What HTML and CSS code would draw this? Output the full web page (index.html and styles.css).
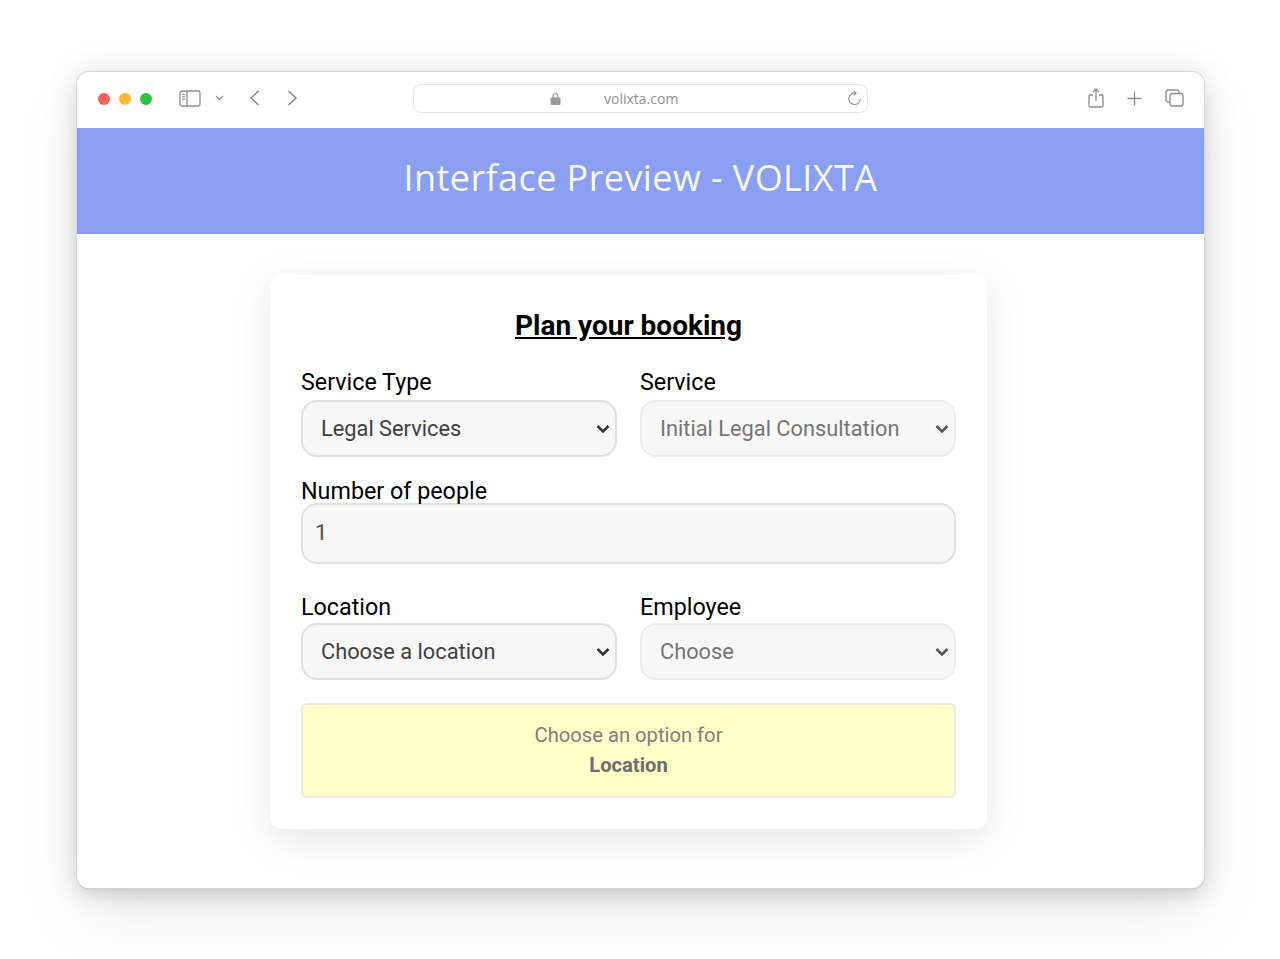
FILE: index.html
```html
<!DOCTYPE html>
<html lang="en">
<head>
<meta charset="utf-8">
<title>Interface Preview - VOLIXTA</title>
<link rel="stylesheet" href="styles.css">
</head>
<body>
<div class="window">
  <div class="toolbar">
    <div class="lights"><span class="light red"></span><span class="light yellow"></span><span class="light green"></span></div>
    <svg class="ic sidebar" width="22" height="17" viewBox="0 0 22 17" fill="none" stroke="#8c8c8c" stroke-width="1.3"><rect x="1" y="1" width="20" height="15" rx="2"/><path d="M8 1v15"/><path d="M3 4.500h3M3 6.800h3M3 9.100h3" stroke-width="1.1"/></svg>
    <svg class="ic chev" width="9" height="6" viewBox="0 0 9 6" fill="none" stroke="#8c8c8c" stroke-width="1.1"><path d="M1 1l3.500 3.500L8 1"/></svg>
    <svg class="ic back" width="11" height="16" viewBox="0 0 11 16" fill="none" stroke="#808080" stroke-width="1.4"><path d="M9.500 1L2 8l7.500 7"/></svg>
    <svg class="ic fwd" width="11" height="16" viewBox="0 0 11 16" fill="none" stroke="#808080" stroke-width="1.4"><path d="M1.500 1L9 8l-7.500 7"/></svg>
    <div class="url">
      <svg class="lock" width="11" height="13" viewBox="0 0 11 13"><path d="M3 6V4a2.500 2.500 0 0 1 5 0v2" fill="none" stroke="#9a9a9a" stroke-width="1.2"/><rect x="0.500" y="5.500" width="10" height="7.500" rx="1" fill="#9a9a9a"/></svg>
      <span class="domain">volixta.com</span>
      <svg class="reload" width="15" height="16" viewBox="0 0 15 16" fill="none" stroke="#8c8c8c" stroke-width="1.1"><path d="M8.500 3.200A5.700 5.700 0 1 0 13.200 9"/><path d="M6.800 0.800L9.200 3.200 6.800 5.400"/></svg>
    </div>
    <div class="actions">
      <svg width="16" height="20" viewBox="0 0 16 20" fill="none" stroke="#8c8c8c" stroke-width="1.3"><path d="M5 7H2a1 1 0 0 0-1 1v10a1 1 0 0 0 1 1h12a1 1 0 0 0 1-1V8a1 1 0 0 0-1-1h-3"/><path d="M8 13V1M5 4l3-3 3 3"/></svg>
      <svg width="15" height="15" viewBox="0 0 15 15" fill="none" stroke="#8c8c8c" stroke-width="1.3"><path d="M7.500 0.500v14M0.500 7.500h14"/></svg>
      <svg width="19" height="18" viewBox="0 0 19 18" fill="none" stroke="#8c8c8c" stroke-width="1.3"><path d="M5 13H3a2 2 0 0 1-2-2V3a2 2 0 0 1 2-2h9a2 2 0 0 1 2 2v2"/><rect x="5" y="4.500" width="13" height="12.500" rx="2"/></svg>
    </div>
  </div>
  <header class="banner">Interface Preview - VOLIXTA</header>
  <main class="card">
    <h1 class="title">Plan your booking</h1>
    <div class="row first">
      <div class="field">
        <label class="label">Service Type</label>
        <select class="control"><option>Legal Services</option></select>
      </div>
      <div class="field">
        <label class="label">Service</label>
        <select class="control" disabled><option>Initial Legal Consultation</option></select>
      </div>
    </div>
    <div class="people">
      <label class="label">Number of people</label>
      <input class="number" type="text" value="1">
    </div>
    <div class="row second">
      <div class="field">
        <label class="label">Location</label>
        <select class="control"><option>Choose a location</option></select>
      </div>
      <div class="field">
        <label class="label">Employee</label>
        <select class="control" disabled><option>Choose</option></select>
      </div>
    </div>
    <div class="notice">Choose an option for<br><strong>Location</strong></div>
  </main>
</div>
</body>
</html>
```
FILE: styles.css
```css
* { box-sizing: border-box; }
html, body { margin: 0; height: 100%; }
body {
  background: #fff;
  padding: 72px 76px 0 77px;
  height: 959px;
  overflow: hidden;
  font-family: Roboto, sans-serif;
}
.window {
  height: 816px;
  background: #fff;
  border-radius: 12px;
  box-shadow: 0 0 0 1px #d6d6d6, 0 1px 1px #aaa, 0 8px 16px rgba(0,0,0,.1), 0 0 36px rgba(0,0,0,.09), 0 26px 64px rgba(0,0,0,.08);
}
.toolbar {
  height: 56px;
  display: flex;
  align-items: center;
  padding: 0 0 4px 21px;
  background: #fff;
  border-radius: 12px 12px 0 0;
}
.lights { display: flex; gap: 9px; margin-top: 2px; }
.light { width: 12px; height: 12px; border-radius: 50%; }
.red { background: #fe5f57; }
.yellow { background: #feb82c; }
.green { background: #27c83f; }
.ic { flex: none; }
.sidebar { margin-left: 27px; }
.chev { margin-left: 14px; }
.back { margin-left: 25px; }
.fwd { margin-left: 27px; }
.url {
  width: 455px;
  height: 29px;
  margin-left: 115px;
  border: 1px solid #e4e4e4;
  border-radius: 8px;
  display: flex;
  align-items: center;
  padding-left: 136px;
  color: #8f8f8f;
  font: 14px "Open Sans", sans-serif;
}
.domain { margin-left: 43px; }
.reload { margin-left: auto; margin-right: 5px; }
.actions {
  margin-left: 220px;
  display: flex;
  align-items: center;
  gap: 23px;
}
.banner {
  height: 106px;
  background: #8a9ef2;
  color: #f6f7ff;
  font: 36px/100px "Open Sans", sans-serif;
  letter-spacing: .42px;
  text-align: center;
}
.card {
  width: 717px;
  height: 554px;
  margin: 41px 0 0 193px;
  padding: 31px;
  background: #fff;
  border-radius: 12px;
  box-shadow: 0 10px 40px rgba(0,0,0,.1);
}
.title {
  margin: 0;
  font-size: 28px;
  line-height: 40px;
  font-weight: 700;
  text-align: center;
  text-decoration: underline;
  color: #000;
}
.row { display: grid; grid-template-columns: 316px 316px; gap: 23px; }
.row.first { margin-top: 18px; }
.row.first .label { line-height: 36px; }
.row.second { margin-top: 27px; }
.row.second .label { line-height: 32px; }
.label {
  display: block;
  font-size: 23.3px;
  color: #000;
}
.control {
  display: block;
  width: 100%;
  height: 57px;
  padding: 0 18px;
  appearance: none;
  background-color: #f7f7f7;
  background-image: url("data:image/svg+xml,%3Csvg xmlns='http://www.w3.org/2000/svg' width='14' height='10' viewBox='0 0 14 10'%3E%3Cpath d='M1.500 2l5.500 5.500L12.500 2' fill='none' stroke='%23333' stroke-width='2.500'/%3E%3C/svg%3E");
  background-repeat: no-repeat;
  background-position: right 5px center;
  border: 2px solid #dfdfdf;
  border-radius: 16px;
  font: 21.8px Roboto, sans-serif;
  color: #404040;
}
.control:disabled {
  color: #757575;
  border-color: #ebebeb;
  opacity: 1;
  background-image: url("data:image/svg+xml,%3Csvg xmlns='http://www.w3.org/2000/svg' width='14' height='10' viewBox='0 0 14 10'%3E%3Cpath d='M1.500 2l5.500 5.500L12.500 2' fill='none' stroke='%23555' stroke-width='2.500'/%3E%3C/svg%3E");
}
.people { margin-top: 22px; }
.people .label { line-height: 24px; }
.number {
  display: block;
  width: 100%;
  height: 61px;
  padding: 0 12px 2px;
  background: #f7f7f7;
  border: 2px solid #e0e0e0;
  border-radius: 16px;
  font: 21.8px Roboto, sans-serif;
  color: #505050;
}
.notice {
  margin-top: 23px;
  height: 95px;
  padding-top: 15px;
  background: #ffffc8;
  border: 2px solid #e9e9de;
  border-radius: 6px;
  text-align: center;
  color: #7d7d7d;
  font-size: 20.2px;
  line-height: 30px;
}
.notice strong { font-weight: 700; color: #6e6e6e; }
```
